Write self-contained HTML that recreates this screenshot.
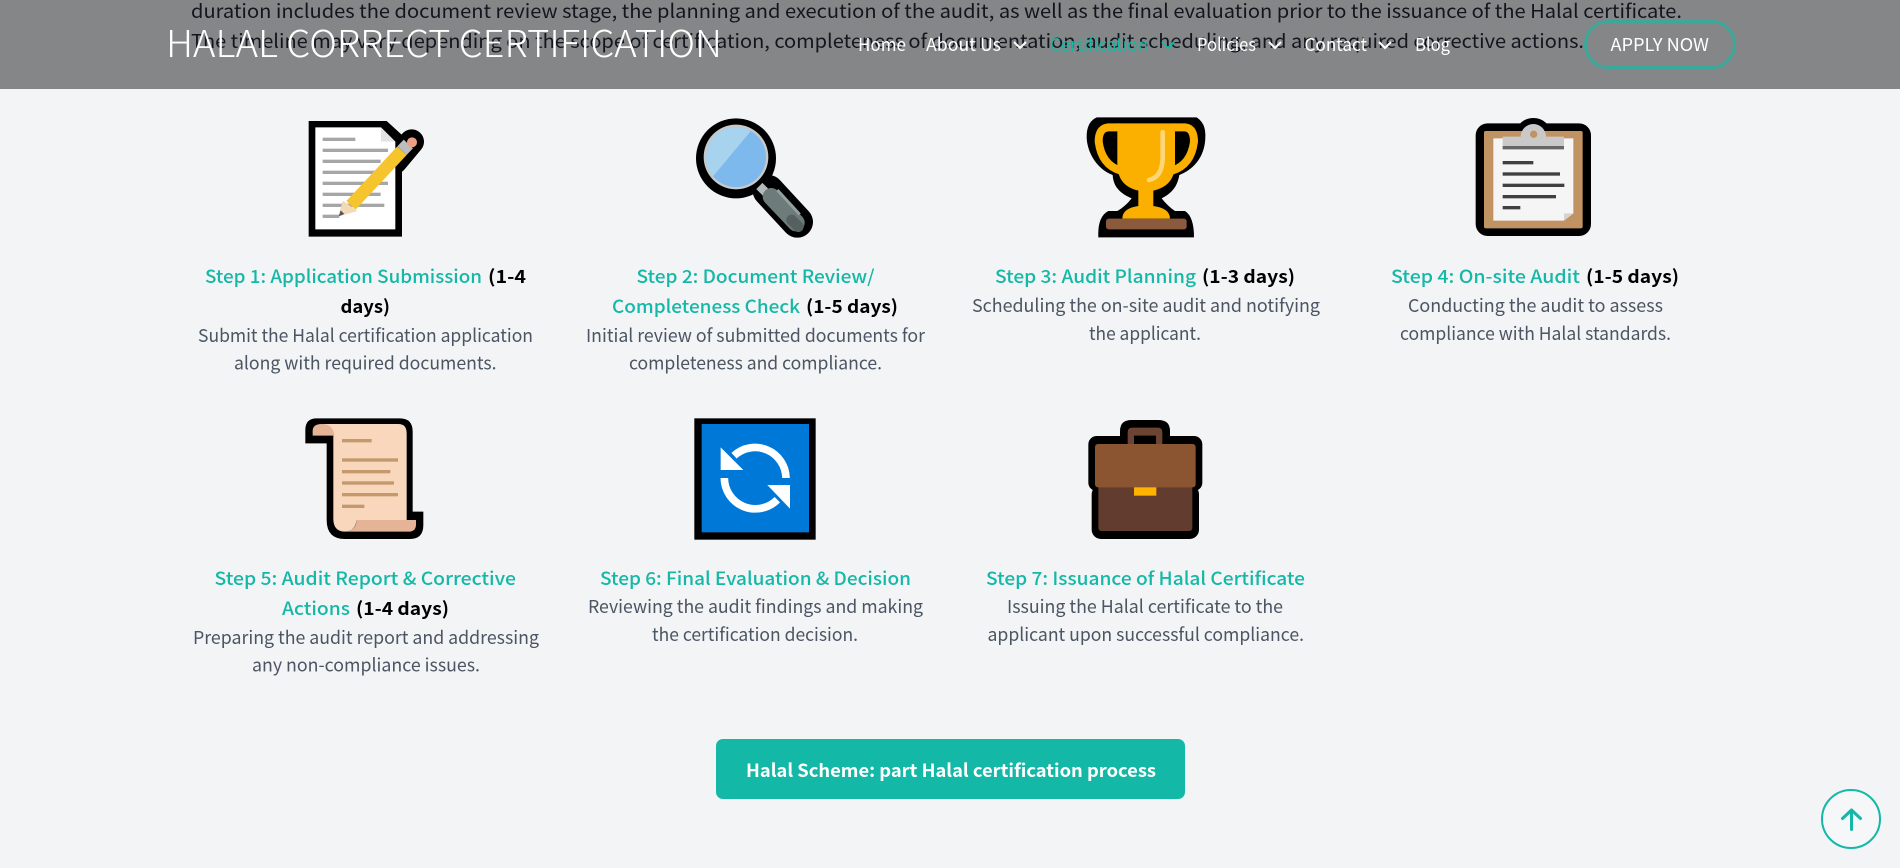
<!DOCTYPE html>
<html lang="en">
<head>
<meta charset="utf-8">
<title>Halal Correct Certification</title>
<style>
html,body{margin:0;padding:0;width:1900px;height:868px;overflow:hidden;background:#f3f4f6}
svg{display:block;position:absolute;left:0;top:0}
text{font-family:"Noto Sans CJK SC","Liberation Sans",sans-serif;white-space:pre}
.b{font-size:19px;fill:#1f2937}
.n{font-size:18px;fill:#fff}
.t{font-size:18px;font-weight:500;fill:#14b8a6}
.k{font-size:18px;font-weight:700;fill:#000}
.d{font-size:18px;fill:#4b5563}
.l{font-size:37px;font-weight:300;fill:#fff}
.a{font-size:18px;fill:#fff}
.h{font-size:18px;font-weight:700;fill:#fff}
</style>
</head>
<body>
<svg width="1900" height="868" viewBox="0 0 1900 868" xmlns="http://www.w3.org/2000/svg">
<rect width="1900" height="868" fill="#f3f4f6"/>

<!-- paragraph scrolled behind header -->
<text class="b" x="191" y="18" textLength="1491" lengthAdjust="spacingAndGlyphs">duration includes the document review stage, the planning and execution of the audit, as well as the final evaluation prior to the issuance of the Halal certificate.</text>
<text class="b" x="191" y="48" textLength="1393" lengthAdjust="spacingAndGlyphs">The timeline may vary depending on the scope of certification, completeness of documentation, audit scheduling, and any required corrective actions.</text>

<!-- header -->
<rect width="1900" height="89" fill="#000" fill-opacity=".45"/>
<text class="l" x="166" y="57" textLength="556" lengthAdjust="spacingAndGlyphs">HALAL CORRECT CERTIFICATION</text>
<text class="n" x="858" y="51" textLength="48" lengthAdjust="spacingAndGlyphs">Home</text>
<text class="n" x="926" y="51" textLength="75" lengthAdjust="spacingAndGlyphs">About Us</text>
<path d="M1014 42l6 6 6-6" fill="none" stroke="#fff" stroke-width="2"/>
<text class="n" x="1050" y="51" textLength="98" lengthAdjust="spacingAndGlyphs" style="fill:#14b8a6">Certification</text>
<path d="M1162 42l6 6 6-6" fill="none" stroke="#14b8a6" stroke-width="2"/>
<text class="n" x="1197" y="51" textLength="59" lengthAdjust="spacingAndGlyphs">Policies</text>
<path d="M1269 42l6 6 6-6" fill="none" stroke="#fff" stroke-width="2"/>
<text class="n" x="1304.5" y="51" textLength="62.5" lengthAdjust="spacingAndGlyphs">Contact</text>
<path d="M1379 42l6 6 6-6" fill="none" stroke="#fff" stroke-width="2"/>
<text class="n" x="1415" y="51" textLength="35" lengthAdjust="spacingAndGlyphs">Blog</text>
<rect x="1585.5" y="21.5" width="149" height="46" rx="23" fill="none" stroke="#3aa89a" stroke-width="3"/>
<text class="a" x="1610.5" y="51" textLength="98.5" lengthAdjust="spacingAndGlyphs">APPLY NOW</text>

<!-- icon 1: document with pencil -->
<svg x="280" y="100" width="200" height="150" viewBox="0 0 600 450">
<path d="M86 63H320L366 105V410H86Z" fill="#000"/>
<path d="M395 125L345 185" stroke="#000" stroke-width="74" stroke-linecap="round"/>
<path d="M106 82H303L346 125V388H106Z" fill="#fff"/>
<path d="M303 82L346 125H303Z" fill="#e3e3e3"/>
<g fill="#a6a6a6"><rect x="128" y="113" width="98" height="10"/><rect x="128" y="146" width="196" height="10"/><rect x="128" y="179" width="174" height="10"/><rect x="128" y="212" width="174" height="10"/><rect x="128" y="245" width="196" height="10"/><rect x="128" y="278" width="174" height="10"/><rect x="128" y="311" width="185" height="10"/><rect x="128" y="344" width="50" height="10"/></g>
<path d="M213 316L366 152" stroke="#f6c42d" stroke-width="38"/>
<path d="M366 152L385 132" stroke="#bdbdbd" stroke-width="38"/>
<circle cx="396" cy="127" r="15" fill="#ee9f88"/>
<path d="M176 349L188 302L232 333Z" fill="#f2d9b8"/>
<path d="M176 349L182 331L193 342Z" fill="#555"/>
</svg>

<!-- icon 2: magnifier -->
<svg x="670" y="100" width="200" height="150" viewBox="0 0 600 450">
<defs><clipPath id="g"><circle cx="198" cy="171" r="90"/></clipPath></defs>
<path d="M295 272L382 366" stroke="#000" stroke-width="94" stroke-linecap="round"/>
<circle cx="198" cy="175" r="120" fill="#000"/>
<circle cx="198" cy="171" r="97" fill="#c9c9c9"/>
<circle cx="198" cy="171" r="90" fill="#7db9ec"/>
<path d="M90 60H270L120 240H90Z" fill="#a7d3ee" clip-path="url(#g)"/>
<path d="M268 258L292 282" stroke="#b2baba" stroke-width="26"/>
<path d="M304 290L378 368" stroke="#6d7b7b" stroke-width="52" stroke-linecap="round"/>
<path d="M322 270L389 343" stroke="#93a0a0" stroke-width="9"/>
<path d="M365 360L385 380" stroke="#566060" stroke-width="32" stroke-linecap="round"/>
</svg>

<!-- icon 3: trophy -->
<svg x="1060" y="100" width="200" height="150" viewBox="0 0 600 450">
<path d="M110 52H410Q438 70 436 110C436 160 410 205 358 225C352 260 335 280 305 295Q325 320 345 333H375Q402 350 402 412H115Q112 350 145 333H172Q195 320 215 295C180 280 160 260 158 225C105 205 80 150 80 110Q80 65 110 52Z" fill="#000"/>
<path d="M178 82H145Q116 84 116 125Q125 195 182 212" fill="none" stroke="#fbb000" stroke-width="24"/>
<path d="M340 82H375Q402 84 402 125Q393 195 336 212" fill="none" stroke="#fbb000" stroke-width="24"/>
<path d="M172 70H345V190C345 240 320 262 280 272V318Q330 325 330 356H187Q187 325 235 318V272C196 262 172 240 172 190Z" fill="#fbb000"/>
<path d="M308 97V175Q306 232 267 240" fill="none" stroke="#ffd675" stroke-width="14" stroke-linecap="round"/>
<rect x="138" y="356" width="242" height="32" rx="8" fill="#8b5a3c"/>
</svg>

<!-- icon 4: clipboard -->
<svg x="1440" y="100" width="200" height="150" viewBox="0 0 600 450">
<rect x="107" y="70" width="346" height="338" rx="36" fill="#000"/>
<ellipse cx="280" cy="100" rx="52" ry="46" fill="#000"/>
<rect x="132" y="93" width="296" height="292" rx="5" fill="#c19362"/>
<path d="M160 115H400V340L372 362H160Z" fill="#f5f5f5"/>
<path d="M400 340L372 362V340Z" fill="#d5d5d0"/>
<path d="M188 110H242A38 38 0 0 1 318 110H372V148H188Z" fill="#c9c9c9"/>
<rect x="188" y="138" width="184" height="10" fill="#666"/>
<circle cx="281" cy="103" r="11" fill="#c19362"/>
<g fill="#404040"><rect x="188" y="183" width="92" height="10"/><rect x="188" y="217" width="172" height="10"/><rect x="188" y="251" width="185" height="10"/><rect x="188" y="285" width="160" height="10"/><rect x="188" y="318" width="53" height="10"/></g>
</svg>

<!-- icon 5: scroll -->
<svg x="280" y="405" width="200" height="150" viewBox="0 0 600 450">
<path d="M110 40H360Q398 40 398 80V320H430V360Q430 402 390 402H195Q140 402 140 345V115H76V75Q76 40 110 40Z" fill="#000"/>
<path d="M125 57H355Q380 57 380 85V345H230Q225 380 195 380Q162 380 160 345V92Q158 60 125 57Z" fill="#f8d7bd"/>
<path d="M98 92V78Q98 57 125 57Q160 57 163 92Z" fill="#e5b496"/>
<path d="M230 345H408V358Q408 380 385 380H200Q228 375 230 345Z" fill="#e5b496"/>
<g fill="#c49a6c"><rect x="186" y="102" width="89" height="10"/><rect x="186" y="160" width="168" height="10"/><rect x="186" y="195" width="145" height="10"/><rect x="186" y="229" width="156" height="10"/><rect x="186" y="264" width="168" height="10"/><rect x="186" y="299" width="67" height="10"/></g>
</svg>

<!-- icon 6: sync -->
<svg x="670" y="405" width="200" height="150" viewBox="0 0 600 450">
<rect x="73" y="40" width="364" height="364" fill="#000"/>
<rect x="95" y="57" width="322" height="325" fill="#0078d7"/>
<g fill="none" stroke="#fff" stroke-width="23"><path d="M192 152A93 93 0 0 1 348 219"/><path d="M163 219A93 93 0 0 0 322 284"/></g>
<path d="M152 127V195H220Z" fill="#fff"/>
<path d="M360 311V240H292Z" fill="#fff"/>
</svg>

<!-- icon 7: briefcase -->
<svg x="1060" y="405" width="200" height="150" viewBox="0 0 600 450">
<path d="M180 110V78Q180 45 215 45H295Q330 45 330 78V110Z" fill="#000"/>
<rect x="85" y="93" width="342" height="165" rx="25" fill="#000"/>
<rect x="95" y="240" width="322" height="162" rx="28" fill="#000"/>
<path d="M203 118V82Q203 68 217 68H293Q307 68 307 82V118H288V92H222V118Z" fill="#6b4433"/>
<rect x="115" y="235" width="282" height="143" rx="9" fill="#623d2f"/>
<rect x="105" y="117" width="302" height="130" rx="9" fill="#8a5530"/>
<rect x="222" y="247" width="67" height="25" fill="#ffb300"/>
</svg>

<!-- step 1 -->
<text class="t" x="205" y="283" textLength="277" lengthAdjust="spacingAndGlyphs">Step 1: Application Submission</text>
<text class="k" x="488" y="283" textLength="38" lengthAdjust="spacingAndGlyphs">(1-4</text>
<text class="k" x="340.5" y="313" textLength="49.5" lengthAdjust="spacingAndGlyphs">days)</text>
<text class="d" x="198" y="342" textLength="335" lengthAdjust="spacingAndGlyphs">Submit the Halal certification application</text>
<text class="d" x="234" y="369.5" textLength="262.5" lengthAdjust="spacingAndGlyphs">along with required documents.</text>
<!-- step 2 -->
<text class="t" x="636.5" y="283" textLength="238" lengthAdjust="spacingAndGlyphs">Step 2: Document Review/</text>
<text class="t" x="612" y="313" textLength="188" lengthAdjust="spacingAndGlyphs">Completeness Check</text>
<text class="k" x="806" y="313" textLength="92" lengthAdjust="spacingAndGlyphs">(1-5 days)</text>
<text class="d" x="586" y="342" textLength="339" lengthAdjust="spacingAndGlyphs">Initial review of submitted documents for</text>
<text class="d" x="629" y="369.5" textLength="253" lengthAdjust="spacingAndGlyphs">completeness and compliance.</text>
<!-- step 3 -->
<text class="t" x="995" y="283" textLength="201" lengthAdjust="spacingAndGlyphs">Step 3: Audit Planning</text>
<text class="k" x="1202" y="283" textLength="93" lengthAdjust="spacingAndGlyphs">(1-3 days)</text>
<text class="d" x="972" y="312" textLength="348" lengthAdjust="spacingAndGlyphs">Scheduling the on-site audit and notifying</text>
<text class="d" x="1089" y="340" textLength="112" lengthAdjust="spacingAndGlyphs">the applicant.</text>
<!-- step 4 -->
<text class="t" x="1391" y="283" textLength="189" lengthAdjust="spacingAndGlyphs">Step 4: On-site Audit</text>
<text class="k" x="1586" y="283" textLength="93" lengthAdjust="spacingAndGlyphs">(1-5 days)</text>
<text class="d" x="1408" y="312" textLength="255" lengthAdjust="spacingAndGlyphs">Conducting the audit to assess</text>
<text class="d" x="1400" y="340" textLength="271" lengthAdjust="spacingAndGlyphs">compliance with Halal standards.</text>
<!-- step 5 -->
<text class="t" x="214.5" y="585" textLength="301.5" lengthAdjust="spacingAndGlyphs">Step 5: Audit Report &amp; Corrective</text>
<text class="t" x="282" y="615" textLength="68" lengthAdjust="spacingAndGlyphs">Actions</text>
<text class="k" x="356" y="615" textLength="93" lengthAdjust="spacingAndGlyphs">(1-4 days)</text>
<text class="d" x="193" y="644" textLength="346" lengthAdjust="spacingAndGlyphs">Preparing the audit report and addressing</text>
<text class="d" x="252" y="671.5" textLength="228" lengthAdjust="spacingAndGlyphs">any non-compliance issues.</text>
<!-- step 6 -->
<text class="t" x="600" y="585" textLength="311" lengthAdjust="spacingAndGlyphs">Step 6: Final Evaluation &amp; Decision</text>
<text class="d" x="588" y="613" textLength="335" lengthAdjust="spacingAndGlyphs">Reviewing the audit findings and making</text>
<text class="d" x="652" y="641" textLength="206" lengthAdjust="spacingAndGlyphs">the certification decision.</text>
<!-- step 7 -->
<text class="t" x="986" y="585" textLength="319" lengthAdjust="spacingAndGlyphs">Step 7: Issuance of Halal Certificate</text>
<text class="d" x="1007" y="613" textLength="276" lengthAdjust="spacingAndGlyphs">Issuing the Halal certificate to the</text>
<text class="d" x="987.5" y="641" textLength="316.5" lengthAdjust="spacingAndGlyphs">applicant upon successful compliance.</text>

<!-- button -->
<rect x="716" y="739" width="469" height="60" rx="7" fill="#14b8a6"/>
<text class="h" x="746" y="777" textLength="410" lengthAdjust="spacingAndGlyphs">Halal Scheme: part Halal certification process</text>

<!-- back to top -->
<circle cx="1851" cy="819" r="29" fill="#f5f7f9" stroke="#14b8a6" stroke-width="2"/>
<path d="M1851.5 829.5V810M1842.5 818.5L1851.5 810L1860.5 818.5" fill="none" stroke="#14b8a6" stroke-width="3" stroke-linecap="round" stroke-linejoin="round"/>
</svg>
</body>
</html>
